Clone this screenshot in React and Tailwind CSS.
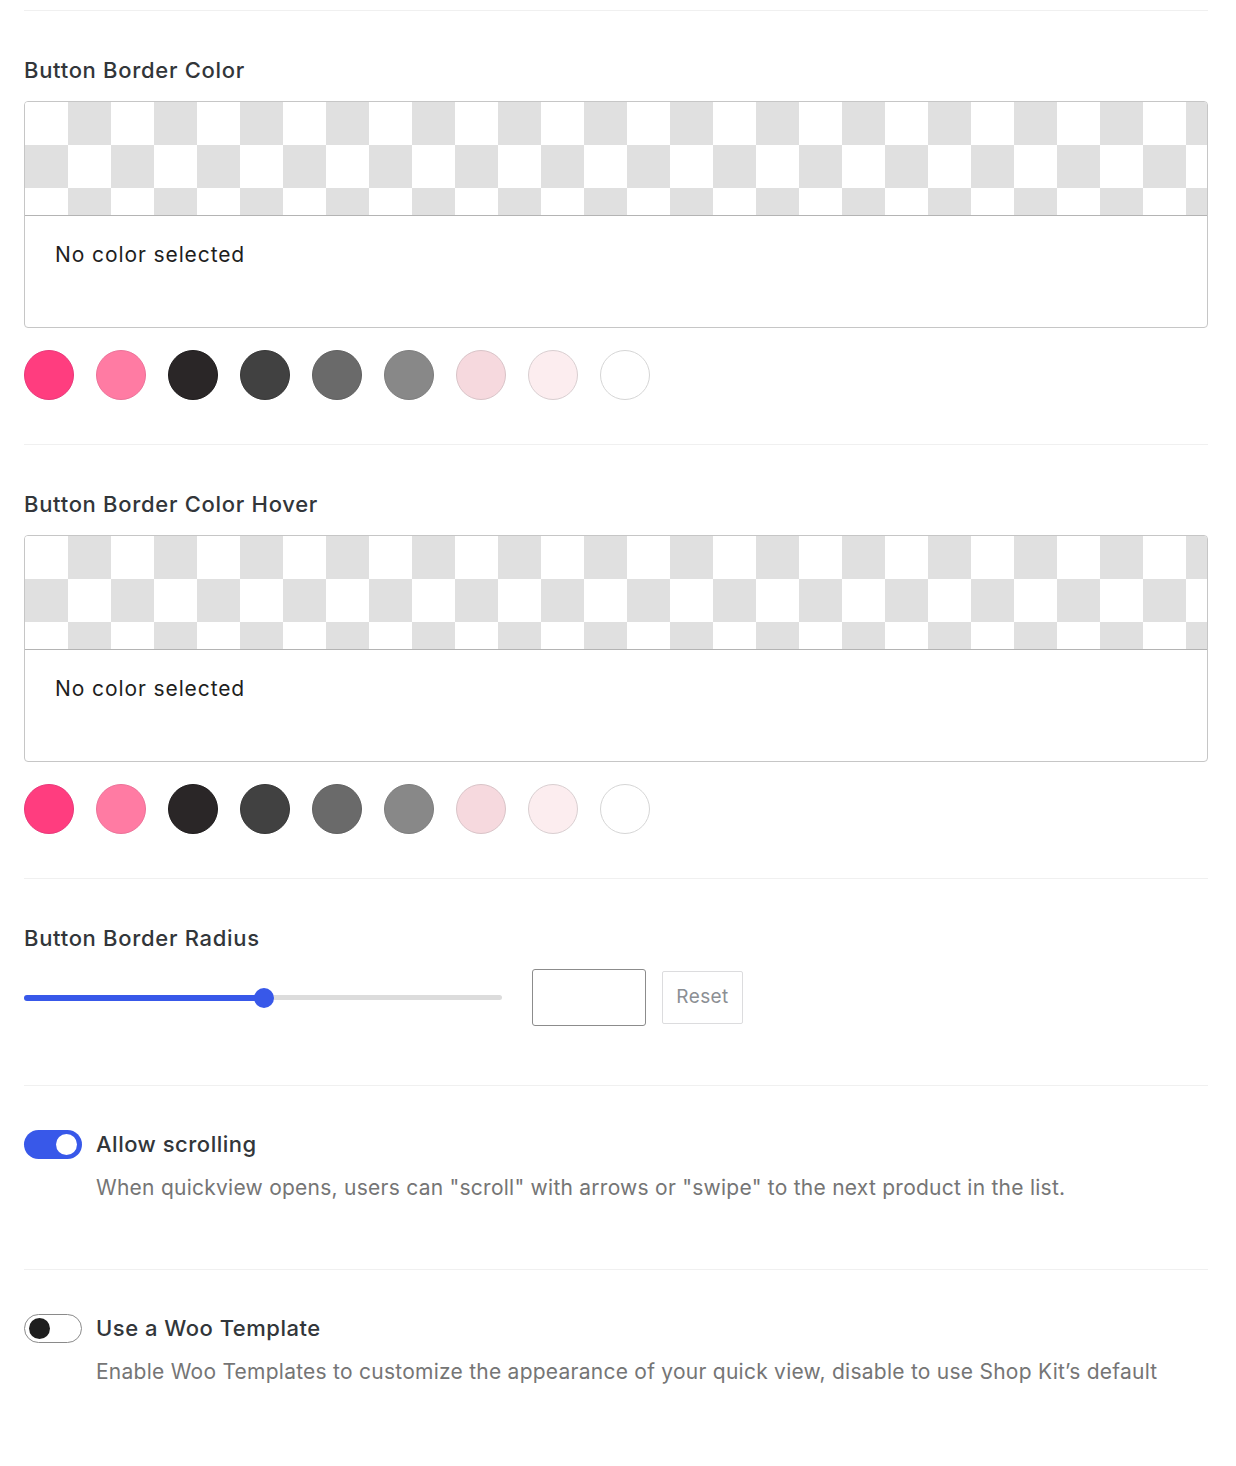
import React, { useState } from 'react'

const SWATCHES = [
  { color: 'bg-[#ff3d7f]', ring: 'border-[#e8387a]' },
  { color: 'bg-[#ff7ba3]', ring: 'border-[#ec7299]' },
  { color: 'bg-[#2a2627]', ring: 'border-[#1f1c1d]' },
  { color: 'bg-[#414141]', ring: 'border-[#373737]' },
  { color: 'bg-[#6a6a6a]', ring: 'border-[#606060]' },
  { color: 'bg-[#888888]', ring: 'border-[#7d7d7d]' },
  { color: 'bg-[#f6d9de]', ring: 'border-[#d9c4c8]' },
  { color: 'bg-[#fcedef]', ring: 'border-[#d9cfd1]' },
  { color: 'bg-white', ring: 'border-[#d6d6d6]' },
]

function Divider() {
  return <div className="h-px bg-[#f0f0f0]" />
}

function ColorSetting({ label }) {
  return (
    <div className="pt-[45px] pb-[44px]">
      <div className="text-[22px] leading-[28px] font-medium tracking-[0.7px] text-[#32363a]">{label}</div>
      <div className="mt-[17px] border border-[#c6c6c6] rounded-[4px] overflow-hidden">
        <div className="h-[114px] border-b border-[#b4b4b4] bg-[image:repeating-conic-gradient(#e0e0e0_0_25%,#ffffff_0_50%)] bg-[length:86px_86px]" />
        <div className="h-[111px] pt-[25px] px-[30px] text-[21px] leading-[28px] tracking-[0.9px] text-[#1e1e1e]">
          No color selected
        </div>
      </div>
      <div className="mt-[22px] flex gap-[22px]">
        {SWATCHES.map((s, i) => (
          <button key={i} className={`w-[50px] h-[50px] rounded-full border ${s.color} ${s.ring}`} />
        ))}
      </div>
    </div>
  )
}

function ToggleSetting({ on, title, desc, onChange }) {
  return (
    <div className="pt-[43px]">
      <div className="flex items-center">
        <button
          onClick={onChange}
          className={`w-[58px] h-[29px] rounded-full flex items-center shrink-0 ${
            on ? 'bg-[#3858e9] justify-end pr-[5px]' : 'bg-white border border-[#8a8a8a] pl-[4px]'
          }`}
        >
          <span className={`block rounded-full ${on ? 'w-[21px] h-[21px] bg-white' : 'w-[21px] h-[21px] bg-[#1e1e1e]'}`} />
        </button>
        <span className="ml-[14px] text-[22px] leading-[30px] font-medium tracking-[0.5px] text-[#32363a]">{title}</span>
      </div>
      <p className="mt-[15px] ml-[72px] text-[21px] leading-[28px] tracking-[0.25px] text-[#757575]">{desc}</p>
    </div>
  )
}

export default function App() {
  const [scrolling, setScrolling] = useState(true)
  const [woo, setWoo] = useState(false)

  return (
    <div className="w-[1236px] h-[1466px] bg-white pl-[24px] pr-[28px] pt-[10px] font-['Inter',sans-serif] overflow-hidden">
      <Divider />
      <ColorSetting label="Button Border Color" />
      <Divider />
      <ColorSetting label="Button Border Color Hover" />
      <Divider />

      <div className="pt-[45px] pb-[59px]">
        <div className="text-[22px] leading-[28px] font-medium tracking-[0.7px] text-[#32363a]">Button Border Radius</div>
        <div className="mt-[17px] flex items-center">
          <div className="w-[478px] h-[20px] flex items-center relative">
            <div className="w-[240px] h-[6px] bg-[#3858e9] rounded-l-full" />
            <div className="flex-1 h-[5px] bg-[#dcdcdc] rounded-r-full" />
            <div className="absolute left-[230px] top-0 w-[20px] h-[20px] rounded-full bg-[#3858e9]" />
          </div>
          <input className="ml-[30px] w-[114px] h-[57px] border border-[#8c8c8c] rounded-[3px] outline-none" />
          <button className="ml-[16px] w-[81px] h-[53px] border border-[#dcdcde] rounded-[2px] text-[19px] tracking-[0.4px] text-[#8c8f94]">
            Reset
          </button>
        </div>
      </div>
      <Divider />

      <div className="h-[183px]">
        <ToggleSetting
          on={scrolling}
          onChange={() => setScrolling(!scrolling)}
          title="Allow scrolling"
          desc={'When quickview opens, users can "scroll" with arrows or "swipe" to the next product in the list.'}
        />
      </div>
      <Divider />

      <ToggleSetting
        on={woo}
        onChange={() => setWoo(!woo)}
        title="Use a Woo Template"
        desc="Enable Woo Templates to customize the appearance of your quick view, disable to use Shop Kit’s default"
      />
    </div>
  )
}
